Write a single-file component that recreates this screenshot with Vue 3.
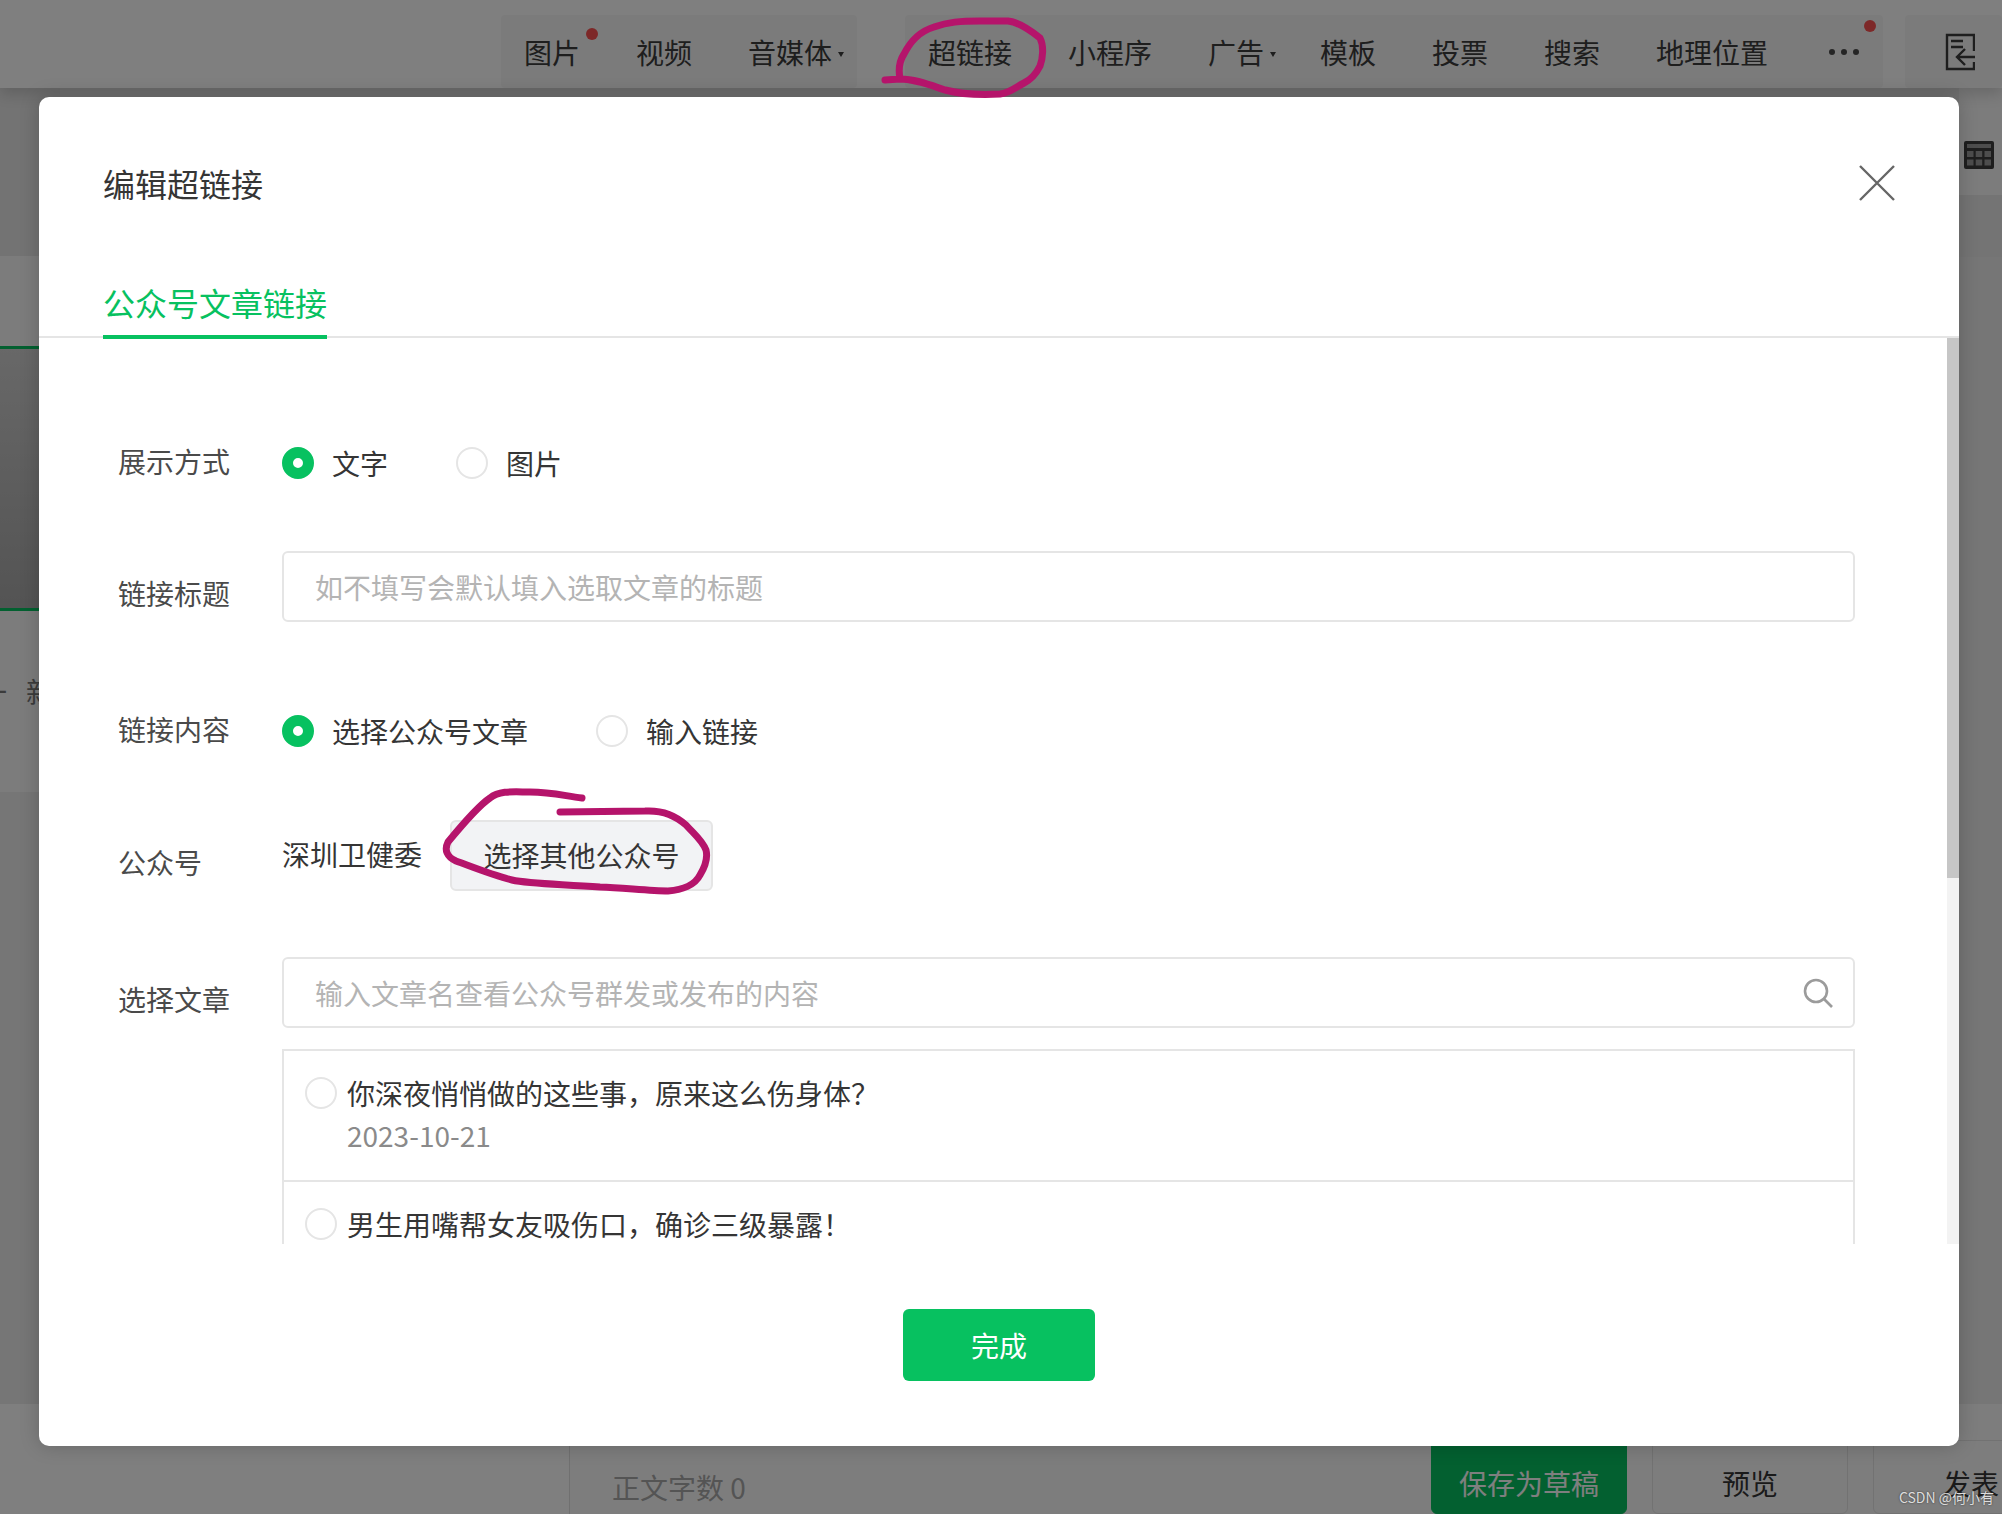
<script setup>
const mediaTools = [
  { name: '图片', dot: true },
  { name: '视频' },
  { name: '音媒体', caret: true }
]
const insertTools = [
  { name: '超链接' },
  { name: '小程序' },
  { name: '广告', caret: true },
  { name: '模板' },
  { name: '投票' },
  { name: '搜索' },
  { name: '地理位置' }
]
const articles = [
  { title: '你深夜悄悄做的这些事，原来这么伤身体？', date: '2023-10-21' },
  { title: '男生用嘴帮女友吸伤口，确诊三级暴露！', date: '2023-10-20' },
  { title: '这种水果千万别空腹吃', date: '2023-10-19' }
]
</script>

<template>
  <div class="page">
    <header class="toolbar">
      <div class="group group-media">
        <span v-for="t in mediaTools" :key="t.name" class="tool">
          {{ t.name }}
          <i v-if="t.caret" class="caret"></i>
          <i v-if="t.dot" class="dot"></i>
        </span>
      </div>
      <div class="group group-insert">
        <span v-for="t in insertTools" :key="t.name" class="tool">
          {{ t.name }}
          <i v-if="t.caret" class="caret"></i>
        </span>
        <span class="more"><b></b><b></b><b></b></span>
        <i class="dot dot-more"></i>
      </div>
      <div class="group group-side">
        <svg width="30" height="38" viewBox="0 0 30 38" fill="none" stroke="#3c3c3c" stroke-width="2.4">
          <path d="M29 18V2H2v34h27v-7" />
          <path d="M6 8h12M6 14h12" />
          <path d="M30 24H12M20 16l-8 8 8 8" />
        </svg>
      </div>
    </header>

    <div class="workspace">
      <aside class="side">
        <div class="side-top"></div>
        <div class="side-panel"></div>
        <div class="side-cover"></div>
        <div class="side-panel side-text"><span>一</span><span>新</span></div>
      </aside>
      <aside class="rail">
        <div class="rail-top">
          <svg width="30" height="28" viewBox="0 0 30 28">
            <rect x="0" y="0" width="30" height="28" rx="2" fill="#3c3c3c" />
            <g fill="#9a9a9a">
              <rect x="3" y="3" width="24" height="4" />
              <rect x="3" y="10" width="6.5" height="6" />
              <rect x="11.7" y="10" width="6.5" height="6" />
              <rect x="20.5" y="10" width="6.5" height="6" />
              <rect x="3" y="18.5" width="6.5" height="6" />
              <rect x="11.7" y="18.5" width="6.5" height="6" />
              <rect x="20.5" y="18.5" width="6.5" height="6" />
            </g>
          </svg>
        </div>
        <div class="rail-mid"></div>
      </aside>
    </div>

    <footer class="footer">
      <div class="count">正文字数 0</div>
      <div class="actions">
        <span class="action action-save">保存为草稿</span>
        <span class="action">预览</span>
        <span class="action action-publish">发表</span>
      </div>
    </footer>

    <div class="mask"></div>

    <section class="modal">
      <div class="modal-head">
        <h2 class="modal-title">编辑超链接</h2>
        <svg class="close" width="36" height="36" viewBox="0 0 36 36" stroke="#666" stroke-width="2.4">
          <path d="M1 1l34 34M35 1L1 35" />
        </svg>
      </div>

      <div class="tabs">
        <span class="tab">公众号文章链接</span>
      </div>

      <div class="modal-body">
        <div class="scroll">
          <div class="form">
            <div class="row row-radio">
              <label class="label">展示方式</label>
              <div class="options">
                <span class="option"><i class="radio on"></i>文字</span>
                <span class="option"><i class="radio"></i>图片</span>
              </div>
            </div>

            <div class="row row-title">
              <label class="label label-low">链接标题</label>
              <div class="input"><span class="placeholder">如不填写会默认填入选取文章的标题</span></div>
            </div>

            <div class="row row-radio row-content">
              <label class="label">链接内容</label>
              <div class="options">
                <span class="option"><i class="radio on"></i>选择公众号文章</span>
                <span class="option"><i class="radio"></i>输入链接</span>
              </div>
            </div>

            <div class="row row-account">
              <label class="label label-low">公众号</label>
              <div class="account">
                <span class="account-name">深圳卫健委</span>
                <span class="btn-other">选择其他公众号</span>
              </div>
            </div>

            <div class="row row-search">
              <label class="label label-low">选择文章</label>
              <div class="search-col">
                <div class="input input-search">
                  <span class="placeholder">输入文章名查看公众号群发或发布的内容</span>
                  <svg width="30" height="30" viewBox="0 0 30 30" fill="none" stroke="#9b9b9b" stroke-width="2.6">
                    <circle cx="13" cy="13" r="11" />
                    <path d="M21 21l8 8" />
                  </svg>
                </div>
                <ul class="articles">
                  <li v-for="a in articles" :key="a.title" class="article">
                    <i class="radio"></i>
                    <div>
                      <div class="article-title">{{ a.title }}</div>
                      <div class="article-date">{{ a.date }}</div>
                    </div>
                  </li>
                </ul>
              </div>
            </div>
          </div>
        </div>
        <div class="track"><div class="thumb"></div></div>
      </div>

      <div class="modal-foot">
        <button class="done">完成</button>
      </div>
    </section>

    <svg class="marks" width="2002" height="1514" viewBox="0 0 2002 1514" fill="none" stroke="#b5146b" stroke-width="7" stroke-linecap="round" stroke-linejoin="round">
      <path d="M885 80L900 79C898 68 900 60 904 54C910 42 918 32 934 27C948 22 960 21 980 21L1008 21C1018 22 1030 30 1040 38C1044 46 1043 58 1040 66C1036 74 1030 80 1024 83C1014 88 1010 93 1000 94C980 95 960 94 945 90C930 85 915 79 900 79" />
      <path d="M582 798C565 796 552 792 530 792C515 792 500 790 490 798C478 806 462 825 448 842C444 850 447 857 456 861C475 868 495 876 512 880C530 884 560 884 600 887C625 888 650 891 668 891C682 890 695 885 700 875C706 865 708 858 706 850C702 840 695 835 686 825C675 815 662 810 645 811L560 812" />
    </svg>

    <div class="watermark">CSDN @何小有</div>
  </div>
</template>

<style>
body {
  margin: 0;
  background: #fff;
}
</style>

<style scoped>
.page {
  position: relative;
  display: flex;
  flex-direction: column;
  width: 2002px;
  height: 1514px;
  overflow: hidden;
  background: #fff;
  font-family: "Noto Sans CJK SC", "Liberation Sans", sans-serif;
  font-size: 28px;
  color: #353535;
}
i {
  font-style: normal;
}

/* page behind the dialog */
.toolbar {
  display: flex;
  flex: none;
  height: 73px;
  padding: 15px 0 0 501px;
  gap: 22px;
  box-shadow: 0 6px 14px rgba(0, 0, 0, 0.16);
  position: relative;
}
.group {
  display: flex;
  align-items: center;
  height: 73px;
  position: relative;
  background: #f6f6f6;
  border-radius: 4px;
  gap: 56px;
  color: #3c3c3c;
}
.group-media {
  width: 356px;
  padding-left: 23px;
  box-sizing: border-box;
}
.group-insert {
  width: 978px;
  padding-left: 23px;
  box-sizing: border-box;
  margin-left: 26px;
}
.group-side {
  flex: 1;
  padding-left: 40px;
}
.tool {
  position: relative;
  white-space: nowrap;
}
.caret {
  position: absolute;
  right: -12px;
  top: 20px;
  border: 3px solid transparent;
  border-top: 5px solid #3c3c3c;
  border-bottom: 0;
}
.dot {
  position: absolute;
  width: 12px;
  height: 12px;
  top: -26px;
  right: -18px;
  border-radius: 50%;
  background: #fa5151;
}
.tool .dot {
  top: -4px;
}
.dot-more {
  top: 5px;
  right: 7px;
}
.more {
  display: flex;
  gap: 6px;
  margin-left: 5px;
}
.more b {
  width: 6px;
  height: 6px;
  border-radius: 50%;
  background: #4a4a4a;
}

.workspace {
  display: flex;
  justify-content: space-between;
  flex: 1;
  background: #ececec;
}
.side {
  width: 60px;
  display: flex;
  flex-direction: column;
}
.side-top {
  height: 168px;
  background: #e6e6e6;
}
.side-panel {
  height: 90px;
  background: #f8f8f8;
}
.side-cover {
  height: 259px;
  border-top: 3px solid #07c160;
  border-bottom: 3px solid #07c160;
  background: linear-gradient(#d0d0d0, #a8a8a8);
}
.side-text {
  height: 181px;
  display: flex;
  gap: 19px;
  padding-top: 60px;
  box-sizing: border-box;
  color: #777;
  margin-left: -21px;
  width: 100px;
  overflow: hidden;
}
.rail {
  width: 43px;
  display: flex;
  flex-direction: column;
}
.rail-top {
  height: 107px;
  padding-top: 49px;
  box-sizing: border-box;
  padding-left: 5px;
  background: #f8f8f8;
}
.rail-mid {
  height: 62px;
  background: #e8e8e8;
}

.footer {
  flex: none;
  height: 110px;
  margin-left: 569px;
  padding-left: 42px;
  box-sizing: border-box;
  display: flex;
  justify-content: space-between;
  border-left: 1px solid #e0e0e0;
  background: #fbfbfb;
}
.count {
  padding-top: 63px;
  line-height: 40px;
  color: #a8a8a8;
}
.actions {
  display: flex;
  align-items: flex-end;
  gap: 25px;
  margin-right: -67px;
}
.action {
  width: 196px;
  height: 74px;
  padding-top: 10px;
  box-sizing: border-box;
  line-height: 64px;
  text-align: center;
  border: 1px solid #e4e4e4;
  border-radius: 6px 6px 6px 6px;
}
.action-save {
  background: #07c160;
  border-color: #07c160;
  color: #fff;
}
.mask {
  position: absolute;
  inset: 0;
  background: rgba(0, 0, 0, 0.5);
}

/* dialog */
.modal {
  position: absolute;
  left: 39px;
  top: 97px;
  width: 1920px;
  height: 1349px;
  display: flex;
  flex-direction: column;
  background: #fff;
  border-radius: 10px;
  box-shadow: 0 0 20px rgba(0, 0, 0, 0.2);
}
.modal-head {
  display: flex;
  flex: none;
  justify-content: space-between;
  align-items: center;
  height: 172px;
  padding: 0 64px;
  box-sizing: border-box;
}
.modal-title {
  margin: 0;
  font-size: 32px;
  font-weight: 400;
  line-height: 44px;
  color: #353535;
}
.tabs {
  flex: none;
  height: 67px;
  padding-left: 64px;
  box-sizing: content-box;
  border-bottom: 2px solid #e5e5e5;
}
.tab {
  display: inline-block;
  height: 66px;
  font-size: 32px;
  line-height: 66px;
  color: #07c160;
  border-bottom: 4px solid #07c160;
  box-sizing: content-box;
  margin-top: 0;
}
.modal-body {
  display: flex;
  flex: none;
  height: 906px;
}
.scroll {
  flex: 1;
  overflow: hidden;
}
.track {
  flex: none;
  width: 12px;
  background: #f3f3f3;
}
.thumb {
  height: 540px;
  background: #c6c6c6;
}
.modal-foot {
  flex: 1;
  display: flex;
  justify-content: center;
  padding-top: 65px;
}
.done {
  width: 192px;
  height: 72px;
  border: 0;
  border-radius: 6px;
  background: #07c160;
  color: #fff;
  font: inherit;
}

/* form */
.form {
  padding: 100px 92px 0 79px;
}
.row {
  display: flex;
}
.label {
  flex: none;
  width: 164px;
  line-height: 46px;
  color: #4a4a4a;
}
.label-low {
  padding-top: 19px;
}
.row-radio {
  height: 50px;
}
.row-title {
  margin-top: 63px;
}
.row-content {
  margin-top: 84px;
}
.row-account {
  margin-top: 64px;
}
.row-search {
  margin-top: 66px;
}
.options {
  display: flex;
  gap: 68px;
  line-height: 50px;
}
.option {
  display: flex;
  align-items: center;
  gap: 18px;
  color: #353535;
}
.radio {
  flex: none;
  display: block;
  width: 32px;
  height: 32px;
  box-sizing: border-box;
  border: 2px solid #e5e5e5;
  border-radius: 50%;
}
.radio.on {
  border: 11px solid #07c160;
  background: #fff;
}
.input {
  flex: 1;
  height: 71px;
  padding: 0 20px 0 31px;
  box-sizing: border-box;
  display: flex;
  align-items: center;
  justify-content: space-between;
  border: 2px solid #e5e5e5;
  border-radius: 6px;
}
.placeholder {
  color: #b4b4b4;
}
.account {
  display: flex;
  align-items: flex-start;
  gap: 28px;
}
.account-name {
  padding-top: 12px;
  line-height: 44px;
}
.btn-other {
  width: 263px;
  height: 71px;
  box-sizing: border-box;
  line-height: 67px;
  text-align: center;
  background: #f2f3f5;
  border: 2px solid #e5e5e5;
  border-radius: 6px;
}
.search-col {
  flex: 1;
  min-width: 0;
}
.articles {
  margin: 21px 0 0;
  padding: 0;
  list-style: none;
  border: 2px solid #e5e5e5;
}
.article {
  display: flex;
  gap: 10px;
  padding: 22px 21px 23px;
  border-bottom: 2px solid #e5e5e5;
}
.article .radio {
  margin-top: 4px;
}
.article-title {
  line-height: 40px;
}
.article-date {
  line-height: 44px;
  color: #8a8a8a;
}

/* hand drawn marks and image watermark */
.marks {
  position: absolute;
  left: 0;
  top: 0;
  pointer-events: none;
}
.watermark {
  position: absolute;
  right: 8px;
  bottom: 7px;
  font-size: 14px;
  line-height: 20px;
  color: #ddd;
  text-shadow: 0 0 2px #333;
}
</style>
